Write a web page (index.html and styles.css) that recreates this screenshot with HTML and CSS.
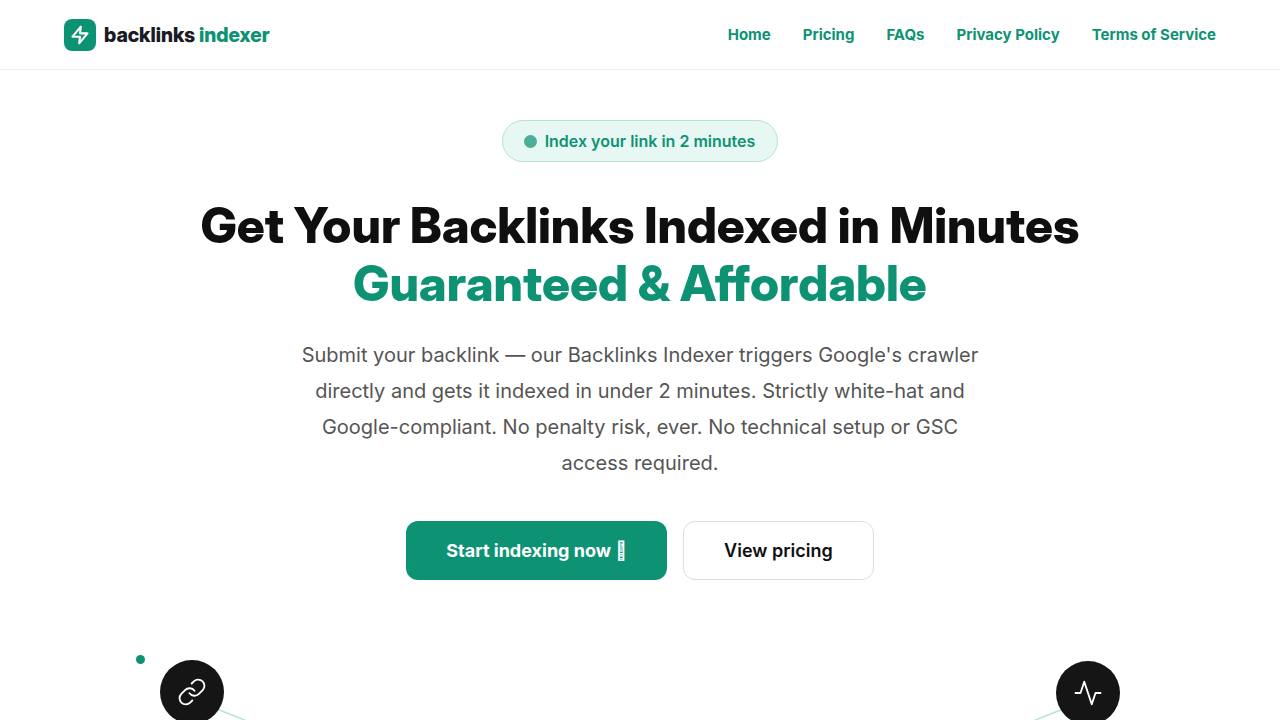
FILE: index.html
```html
<!DOCTYPE html>
<html lang="en">
<head>
<meta charset="utf-8">
<meta name="viewport" content="width=device-width, initial-scale=1">
<title>Backlinks Indexer</title>
<link rel="stylesheet" href="styles.css">
</head>
<body>
<header class="site-header">
  <a class="brand" href="#">
    <span class="brand-mark">
      <svg width="20" height="20" viewBox="0 0 24 24" fill="none" stroke="currentColor" stroke-width="2.5" stroke-linecap="round" stroke-linejoin="round" aria-hidden="true"><path d="M13 2 3 14h9l-1 8 10-12h-9l1-8z"/></svg>
    </span>
    <span class="brand-name">backlinks <span class="accent">indexer</span></span>
  </a>
  <nav class="site-nav">
    <a href="#">Home</a>
    <a href="#">Pricing</a>
    <a href="#">FAQs</a>
    <a href="#">Privacy Policy</a>
    <a href="#">Terms of Service</a>
  </nav>
</header>
<main class="hero">
  <p class="badge"><span class="badge-dot"></span>Index your link in 2 minutes</p>
  <h1 class="title">Get Your Backlinks Indexed in Minutes<br><span class="accent">Guaranteed &amp; Affordable</span></h1>
  <p class="lead">Submit your backlink — our Backlinks Indexer triggers Google's crawler directly and gets it indexed in under 2 minutes. Strictly white-hat and Google-compliant. No penalty risk, ever. No technical setup or GSC access required.</p>
  <div class="actions">
    <button class="btn btn-primary" type="button">Start indexing now &#xE8E5;</button>
    <button class="btn btn-outline" type="button">View pricing</button>
  </div>
</main>
<section class="network" aria-label="Indexing network">
  <div class="canvas">
    <svg class="links" viewBox="0 0 1024 160" fill="none" aria-hidden="true">
      <path d="M64 39 384 167M960 39 640 167"/>
    </svg>
    <span class="pulse"></span>
    <span class="node node-link">
      <svg width="30" height="30" viewBox="0 0 24 24" fill="none" stroke="currentColor" stroke-width="1.5" stroke-linecap="round" stroke-linejoin="round" aria-hidden="true"><path d="M10 13a5 5 0 0 0 7.54.54l3-3a5 5 0 0 0-7.07-7.07l-1.72 1.71"/><path d="M14 11a5 5 0 0 0-7.54-.54l-3 3a5 5 0 0 0 7.07 7.07l1.71-1.71"/></svg>
    </span>
    <span class="node node-activity">
      <svg width="30" height="30" viewBox="0 0 24 24" fill="none" stroke="currentColor" stroke-width="1.5" stroke-linecap="round" stroke-linejoin="round" aria-hidden="true"><path d="M22 12h-4l-3 9L9 3l-3 9H2"/></svg>
    </span>
  </div>
</section>
</body>
</html>
```
FILE: styles.css
```css
:root {
  --green: #0d9373;
  --ink: #0f0f10;
}

* { box-sizing: border-box; }

body {
  margin: 0;
  min-height: 100vh;
  display: flex;
  flex-direction: column;
  background: #fff;
  color: var(--ink);
  font-family: Inter, "Liberation Sans", sans-serif;
}

.accent { color: var(--green); }

.site-header {
  display: flex;
  align-items: center;
  justify-content: space-between;
  padding: 19px 64px 18px;
  border-bottom: 1px solid #f0f0f2;
}

.brand {
  display: flex;
  align-items: center;
  gap: 8px;
  color: #1a1a24;
  text-decoration: none;
}

.brand-mark {
  display: grid;
  place-items: center;
  width: 32px;
  height: 32px;
  border-radius: 8px;
  background: var(--green);
  color: #fff;
}

.brand-name {
  font-family: "Inter Display", Inter, "Liberation Sans", sans-serif;
  font-size: 20px;
  font-weight: 800;
}

.site-nav {
  display: flex;
  gap: 32px;
}

.site-nav a {
  color: var(--green);
  font-size: 15px;
  font-weight: 700;
  line-height: 20px;
  text-decoration: none;
}

.hero {
  display: flex;
  flex-direction: column;
  align-items: center;
  padding: 50px 24px 72px;
  text-align: center;
}

.badge {
  display: flex;
  align-items: center;
  gap: 8px;
  margin: 0 0 35px;
  padding: 8px 22px 8px 21px;
  border: 1px solid #b9e2d7;
  border-radius: 999px;
  background: #e7f7f3;
  color: var(--green);
  font-size: 16px;
  font-weight: 600;
  line-height: 24px;
}

.badge-dot {
  width: 13px;
  height: 13px;
  border-radius: 50%;
  background: #4bae96;
}

.title {
  margin: 0 0 24px;
  font-family: "Inter Display", Inter, "Liberation Sans", sans-serif;
  font-size: 49px;
  font-weight: 800;
  line-height: 58px;
}

.lead {
  max-width: 700px;
  margin: 0 0 40px;
  color: #555;
  font-size: 20px;
  line-height: 36px;
}

.actions {
  display: flex;
  flex-wrap: wrap;
  justify-content: center;
  gap: 16px;
}

.btn {
  padding: 19px 40px;
  border: 0;
  border-radius: 12px;
  font-family: inherit;
  font-size: 18px;
  font-weight: 600;
  line-height: 21px;
  cursor: pointer;
}

.btn-primary {
  background: var(--green);
  color: #fff;
  font-weight: 700;
}

.btn-outline {
  padding: 18px 40px;
  border: 1px solid #dddde0;
  background: #fff;
  color: var(--ink);
}

.network {
  flex: 1;
  display: flex;
  justify-content: center;
  overflow: hidden;
  padding-top: 8px;
}

.canvas {
  position: relative;
  flex: 0 1 1024px;
}

.links {
  position: absolute;
  inset: 0 0 auto;
  width: 100%;
  stroke: #b9e2d7;
  stroke-width: 1.5;
}

.node {
  position: absolute;
  display: grid;
  place-items: center;
  width: 64px;
  height: 64px;
  border-radius: 50%;
  background: #151515;
  color: #fff;
}

.node-link { top: 0; left: 32px; }
.node-activity { top: 1px; right: 32px; }

.pulse {
  position: absolute;
  top: -5px;
  left: 8px;
  width: 9px;
  height: 9px;
  border-radius: 50%;
  background: var(--green);
}
```
